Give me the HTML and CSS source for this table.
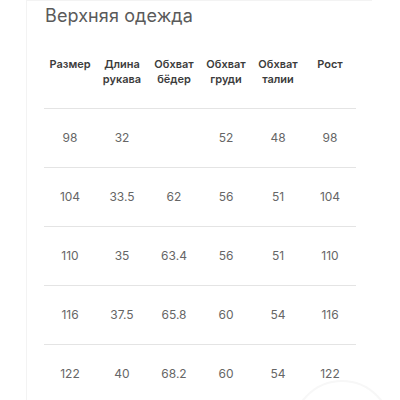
FILE: index.html
```html
<!DOCTYPE html>
<html lang="ru">
<head>
<meta charset="utf-8">
<link rel="stylesheet" href="styles.css">
</head>
<body>
<div class="card">
  <h1 class="title">Верхняя одежда</h1>
  <table class="sizes">
    <thead>
      <tr>
        <th>Размер</th>
        <th>Длина<br>рукава</th>
        <th>Обхват<br>бёдер</th>
        <th>Обхват<br>груди</th>
        <th>Обхват<br>талии</th>
        <th>Рост</th>
      </tr>
    </thead>
    <tbody>
      <tr><td>98</td><td>32</td><td></td><td>52</td><td>48</td><td>98</td></tr>
      <tr><td>104</td><td>33.5</td><td>62</td><td>56</td><td>51</td><td>104</td></tr>
      <tr><td>110</td><td>35</td><td>63.4</td><td>56</td><td>51</td><td>110</td></tr>
      <tr><td>116</td><td>37.5</td><td>65.8</td><td>60</td><td>54</td><td>116</td></tr>
      <tr class="last"><td>122</td><td>40</td><td>68.2</td><td>60</td><td>54</td><td>122</td></tr>
    </tbody>
  </table>
</div>
<div class="blob-clip"><div class="blob"></div></div>
</body>
</html>
```

FILE: styles.css
```css
html, body {
  margin: 0;
  padding: 0;
  background: #ffffff;
  overflow: hidden;
}
body {
  width: 400px;
  height: 400px;
  position: relative;
  font-family: Inter, "Noto Sans", sans-serif;
}
.card {
  margin-left: 26px;
  width: 346px;
  height: 400px;
  border-left: 1px solid #f3f3f3;
  border-top: 1px solid #f3f3f3;
  box-sizing: border-box;
  overflow: hidden;
}
.title {
  margin: 0;
  padding: 3px 0 0 18px;
  height: 34px;
  box-sizing: border-box;
  font-size: 18px;
  font-weight: 400;
  line-height: 24px;
  color: #5a5a5a;
  letter-spacing: 0.1px;
}
.sizes {
  margin-left: 17px;
  width: 312px;
  border-collapse: collapse;
  table-layout: fixed;
}
.sizes th {
  height: 73px;
  padding: 22px 0 0;
  box-sizing: border-box;
  font-size: 11px;
  line-height: 15px;
  font-weight: 600;
  color: #3c3c3c;
  text-align: center;
  vertical-align: top;
  border-bottom: 1px solid #e4e4e4;
}
.sizes td {
  height: 58px;
  padding: 0;
  font-size: 12px;
  font-weight: 400;
  color: #666666;
  text-align: center;
  vertical-align: middle;
  border-bottom: 1px solid #e4e4e4;
}
.sizes tr.last td {
  border-bottom: none;
}
.blob-clip {
  position: absolute;
  left: 280px;
  top: 376px;
  width: 120px;
  height: 24px;
  overflow: hidden;
}
.blob {
  margin: 4px 0 0 12px;
  width: 100px;
  height: 100px;
  border-radius: 50%;
  border: 2px solid #f7f7f7;
  box-sizing: border-box;
}
```
